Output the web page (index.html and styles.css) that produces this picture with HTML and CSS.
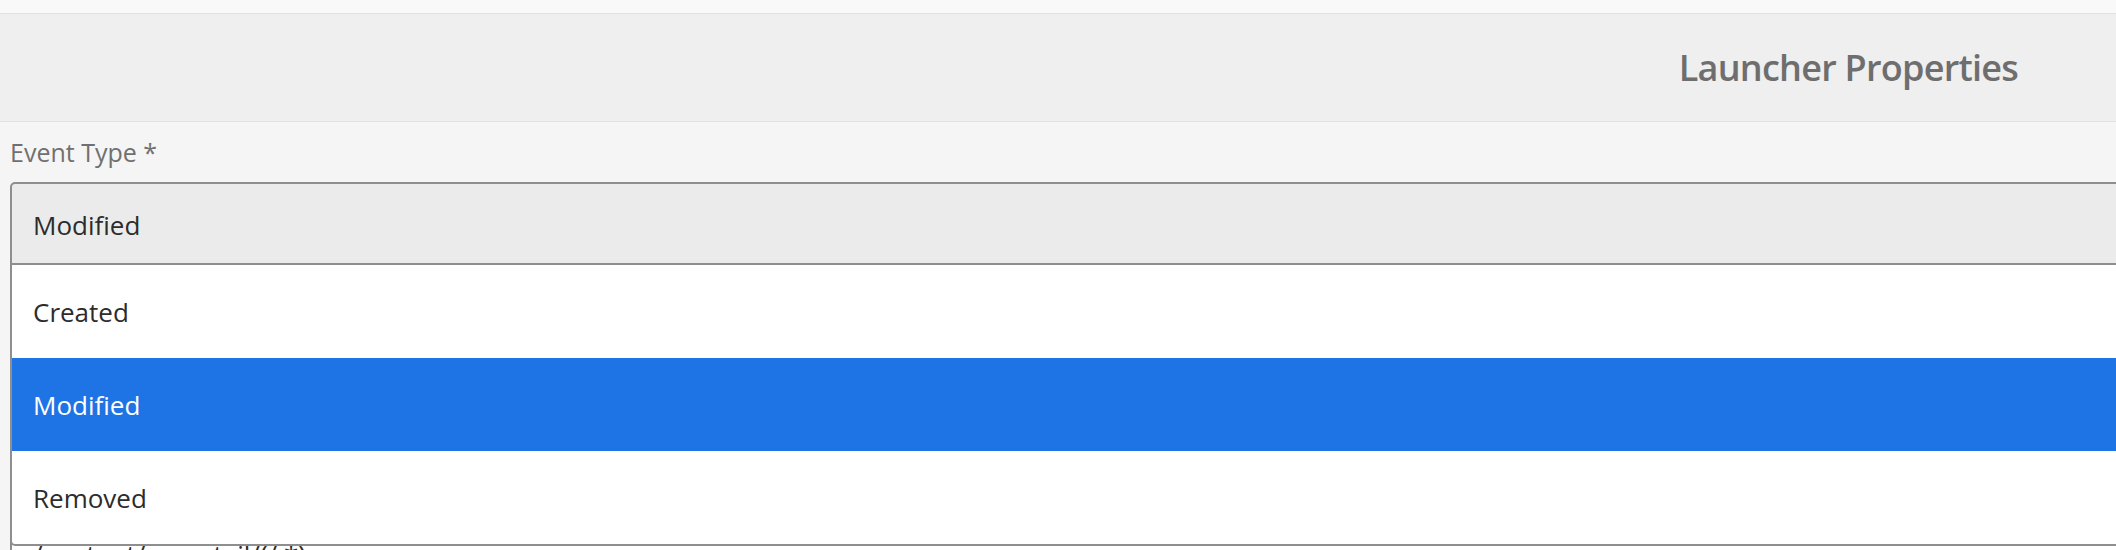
FILE: index.html
```html
<!DOCTYPE html>
<html lang="en">
<head>
<meta charset="utf-8">
<title>Launcher Properties</title>
<link rel="stylesheet" href="styles.css">
</head>
<body>
<div class="topbar"></div>
<header class="header">
  <h1 class="title">Launcher Properties</h1>
</header>
<main class="panel">
  <div class="field">
    <label class="label">Event Type *</label>
    <div class="select-wrap">
      <div class="select">Modified</div>
      <ul class="menu">
        <li class="option">Created</li>
        <li class="option selected">Modified</li>
        <li class="option">Removed</li>
      </ul>
    </div>
  </div>
  <div class="field field-glob">
    <label class="label">Glob *</label>
    <div class="input">/content/we-retail/(/.*)</div>
  </div>
</main>
</body>
</html>
```

FILE: styles.css
```css
* { box-sizing: border-box; }

html, body {
  margin: 0;
  padding: 0;
  overflow: hidden;
  background: #f5f5f5;
  font-family: "Open Sans", "DejaVu Sans", sans-serif;
}

.topbar {
  height: 14px;
  background: #f9f9f9;
  border-bottom: 1px solid #e2e2e2;
}

.header {
  height: 108px;
  background: #efefef;
  border-bottom: 1px solid #e2e2e2;
  display: flex;
  align-items: center;
  justify-content: flex-end;
  padding-right: 98px;
}

.title {
  margin: 0;
  font-size: 36px;
  font-weight: 600;
  letter-spacing: -0.75px;
  color: #6e6e6e;
  line-height: 42px;
}

.panel {
  padding: 14px 0 0 10px;
}

.label {
  display: block;
  font-size: 25px;
  line-height: 33px;
  color: #707070;
  margin-bottom: 13px;
}

.select-wrap {
  position: relative;
  margin-right: -60px;
}

.select {
  height: 83px;
  background: #ebebeb;
  border: 2px solid #8e8e8e;
  border-radius: 5px 5px 0 0;
  display: flex;
  align-items: center;
  padding: 2px 0 0 21px;
  font-size: 26px;
  color: #2c2c2c;
}

.menu {
  position: absolute;
  top: 83px;
  left: 0;
  right: 0;
  margin: 0;
  padding: 0;
  list-style: none;
  background: #fff;
  border: 2px solid #8e8e8e;
  border-top: 0;
  border-radius: 0 0 5px 5px;
  z-index: 2;
}

.option {
  height: 93px;
  display: flex;
  align-items: center;
  padding-left: 21px;
  font-size: 26px;
  color: #2c2c2c;
}

.option.selected {
  background: #1e74e4;
  color: #fff;
}

.field-glob {
  margin-top: 201px;
}

.input {
  height: 83px;
  background: #fff;
  border: 2px solid #8e8e8e;
  border-radius: 5px;
  margin-right: -60px;
  display: flex;
  align-items: center;
  padding-left: 21px;
  font-size: 26px;
  color: #2c2c2c;
}
```
